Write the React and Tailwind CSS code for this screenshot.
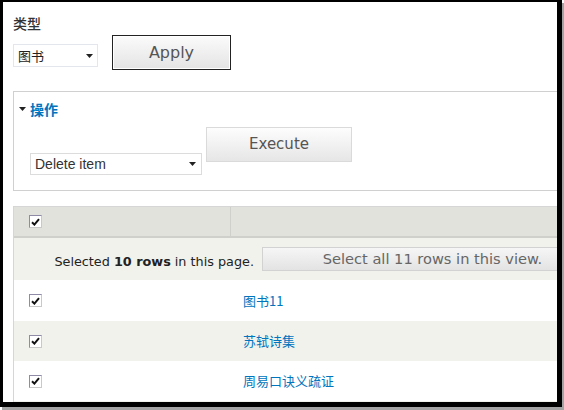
// 뷰 벌크 작업 화면 (Drupal Seven 스타일)
const FONT = { fontFamily: '"DejaVu Sans", Verdana, "Noto Sans CJK SC", sans-serif' }

const ROWS = [
  { title: '图书11', striped: false, h: 'h-[41px]' },
  { title: '苏轼诗集', striped: true, h: 'h-[40px]' },
  { title: '周易口诀义疏证', striped: false, h: 'h-[40px]' },
]

function Check() {
  return (
    <span className="inline-flex items-center justify-center w-[13px] h-[13px] bg-white border border-[#8f8aa6] border-r-[#c9c9c9] border-b-[#c9c9c9]">
      <svg width="9" height="8" viewBox="0 0 9 8">
        <path d="M1 4.2 L3.4 6.6 L8 1.2" fill="none" stroke="#111" strokeWidth="2" />
      </svg>
    </span>
  )
}

function Caret() {
  return (
    <svg width="7" height="4" viewBox="0 0 7 4" className="flex-shrink-0">
      <path d="M0 0 H7 L3.5 4 Z" fill="#222" />
    </svg>
  )
}

export default function App() {
  return (
    <div className="w-[564px] h-[410px] bg-white" style={FONT}>
      <div className="w-[562px] h-[407px] border-black border-t-2 border-l-[3px] border-r-[5px] border-b-[5px] shadow-[2px_3px_0_#a3a3a3] overflow-hidden bg-white">
        <div className="w-[640px] pl-[10px] pt-[11px]">

          {/* 유형 필터 */}
          <div className="text-[14px] font-medium text-[#333] leading-[20px]" style={{ fontFamily: '"Noto Sans CJK SC", sans-serif' }}>类型</div>
          <div className="flex items-start gap-[14px] mt-[2px]">
            <div className="mt-[9px] w-[85px] h-[23px] flex items-center justify-between pl-[4px] pr-[4px] border border-[#e3e6ec] bg-white text-[13px] text-[#222]" style={{ fontFamily: '"Noto Sans CJK SC", sans-serif' }}>
              <span>图书</span>
              <Caret />
            </div>
            <button className="w-[119px] h-[35px] border border-[#222] bg-gradient-to-b from-[#fbfbfb] to-[#e4e4e4] text-[16px] text-[#555] shadow-[inset_0_0_0_1px_#fff]">
              Apply
            </button>
          </div>

          {/* 작업 필드셋 */}
          <div className="mt-[21px] h-[100px] border border-[#d0d0d0]">
            <div className="flex items-center gap-[4px] pl-[5px] pt-[8px]">
              <Caret />
              <span className="text-[14px] font-bold text-[#0074bd] leading-[18px]" style={{ fontFamily: '"Noto Sans CJK SC", sans-serif' }}>操作</span>
            </div>
            <div className="flex items-start gap-[4px] pl-[16px] mt-[9px]">
              <div className="mt-[26px] w-[172px] h-[22px] flex items-center justify-between pl-[4px] pr-[5px] border border-[#dcdcdc] bg-white text-[14px] text-[#333]" style={{ fontFamily: '"Liberation Sans", Arial, sans-serif' }}>
                <span>Delete item</span>
                <Caret />
              </div>
              <button className="w-[146px] h-[35px] border border-[#dadada] bg-gradient-to-b from-[#fdfdfd] to-[#e6e6e6] text-[15px] text-[#555]">
                Execute
              </button>
            </div>
          </div>

          {/* 테이블 */}
          <div className="mt-[15px] border-l border-t border-[#d6d6d6]">
            <div className="flex h-[31px] bg-[#e1e2dc] border-b-2 border-[#cfcfcb]">
              <div className="w-[217px] border-r border-[#cfcfcb] flex items-center pl-[15px]">
                <Check />
              </div>
              <div className="flex-1" />
            </div>
            <div className="flex items-center h-[42px] bg-[#f2f2ed]">
              <div className="w-[248px] mt-[6px] text-right text-[12.8px] text-[#222] pr-[8px]">
                Selected <b>10 rows</b> in this page.
              </div>
              <button className="w-[341px] h-[24px] border border-[#d2d2d2] bg-gradient-to-b from-[#f6f6f6] to-[#e3e3e3] text-[14.6px] text-[#666] leading-none">
                Select all 11 rows in this view.
              </button>
            </div>
            {ROWS.map((r, i) => (
              <div key={i} className={`flex items-center ${r.h} ${r.striped ? 'bg-[#f2f2ed]' : 'bg-white'}`}>
                <div className="w-[218px] pl-[15px] flex items-center">
                  <Check />
                </div>
                <a className="pl-[11px] text-[13px] text-[#0074bd]" style={{ fontFamily: '"Noto Sans CJK SC", sans-serif' }}>{r.title}</a>
              </div>
            ))}
            <div className="h-[4px] bg-[#f2f2ed]" />
          </div>
        </div>
      </div>
    </div>
  )
}
